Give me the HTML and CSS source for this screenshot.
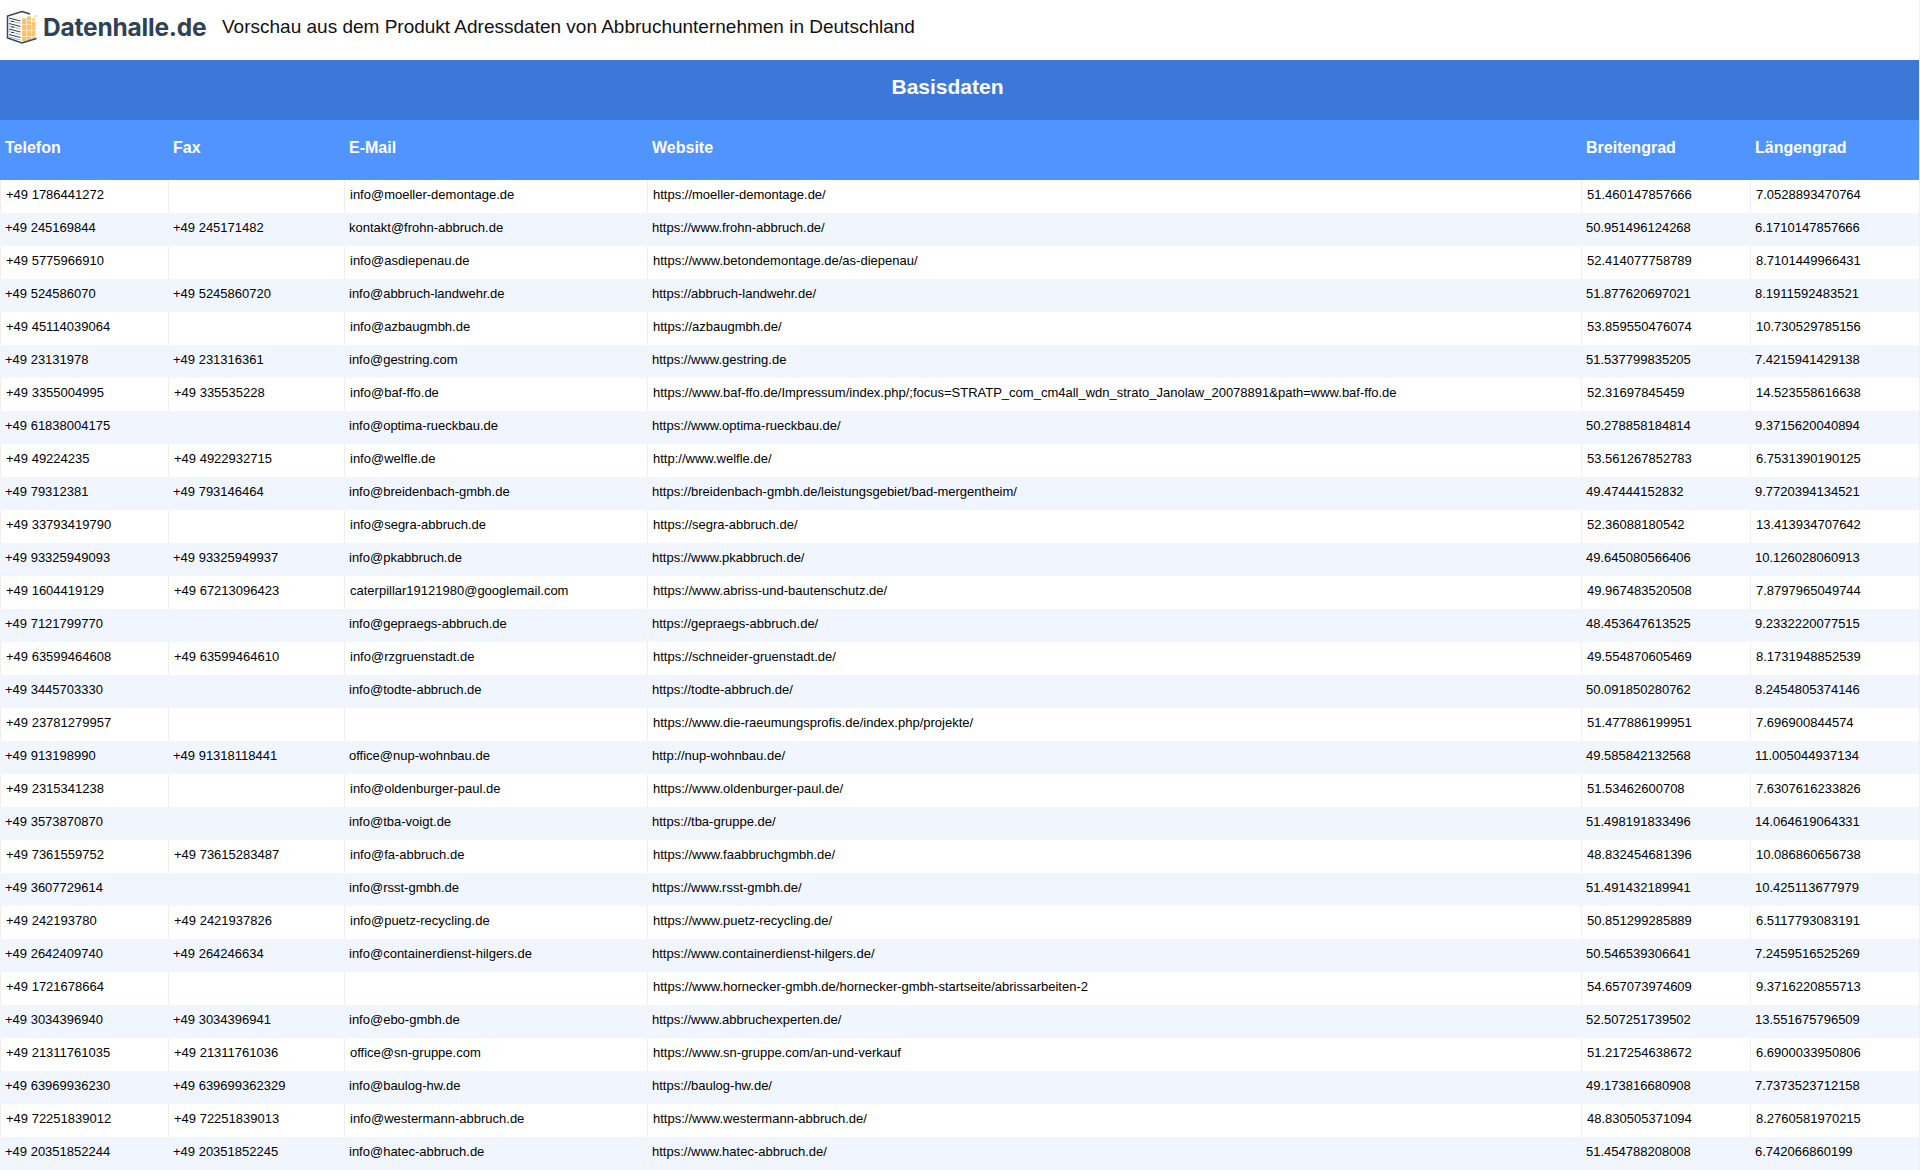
FILE: index.html
```html
<!DOCTYPE html>
<html lang="de">
<head>
<meta charset="utf-8">
<title>Vorschau</title>
<link rel="stylesheet" href="styles.css">
</head>
<body>
<div class="page">
<header class="top">
  <div class="logo">
    <svg class="logo-mark" width="34" height="34" viewBox="0 0 34 34">
      <g fill="#f6c469">
        <rect x="17" y="8.5" width="4.5" height="6"/><rect x="22" y="6.5" width="4" height="3.5"/><rect x="22" y="10.5" width="4" height="4"/>
        <rect x="27" y="8" width="3" height="3" fill="#f9d793"/><rect x="29.5" y="5" width="2" height="2.5" fill="#f9d793"/>
        <rect x="17" y="15" width="4.5" height="5.5"/><rect x="22" y="15" width="4" height="5.5"/><rect x="26.5" y="12" width="4" height="8.5"/>
        <rect x="17" y="21" width="4.5" height="5"/><rect x="22" y="21" width="4" height="5"/><rect x="26.5" y="21" width="4" height="5"/>
        <rect x="17" y="26.5" width="4.5" height="5"/><rect x="22" y="26.5" width="4" height="4"/><rect x="26.5" y="26.5" width="4" height="2"/>
      </g>
      <path d="M17 1.5 L2.5 6 V28 L17 33 L31.5 28.5 M17 1.5 L25 4" fill="none" stroke="#33475b" stroke-width="1.5"/>
      <path d="M4 8 L15.5 11 M4 13.5 L15.5 16.5 M4 19 L15.5 22 M4 24.5 L15.5 27.5" fill="none" stroke="#33475b" stroke-width="1.2"/>
      <path d="M4 10.5 L15.5 13.5 M4 16 L15.5 19 M4 21.5 L15.5 24.5 M4 27 L15.5 30" fill="none" stroke="#33475b" stroke-width="0.8" opacity="0.55"/>
      <path d="M6 11.5h3M6 17h3M6 22.5h3" stroke="#33475b" stroke-width="1"/>
    </svg>
    <span class="logo-text">Datenhalle.de</span>
  </div>
  <h1 class="headline">Vorschau aus dem Produkt Adressdaten von Abbruchunternehmen in Deutschland</h1>
</header>
<table class="data">
<colgroup><col class="c1"><col class="c2"><col class="c3"><col class="c4"><col class="c5"><col class="c6"></colgroup>
<thead>
<tr class="band"><th colspan="6">Basisdaten</th></tr>
<tr class="heads"><th>Telefon</th><th>Fax</th><th>E-Mail</th><th>Website</th><th>Breitengrad</th><th>Längengrad</th></tr>
</thead>
<tbody>
<tr><td>+49 1786441272</td><td></td><td>info@moeller-demontage.de</td><td>https://moeller-demontage.de/</td><td>51.460147857666</td><td>7.0528893470764</td></tr>
<tr><td>+49 245169844</td><td>+49 245171482</td><td>kontakt@frohn-abbruch.de</td><td>https://www.frohn-abbruch.de/</td><td>50.951496124268</td><td>6.1710147857666</td></tr>
<tr><td>+49 5775966910</td><td></td><td>info@asdiepenau.de</td><td>https://www.betondemontage.de/as-diepenau/</td><td>52.414077758789</td><td>8.7101449966431</td></tr>
<tr><td>+49 524586070</td><td>+49 5245860720</td><td>info@abbruch-landwehr.de</td><td>https://abbruch-landwehr.de/</td><td>51.877620697021</td><td>8.1911592483521</td></tr>
<tr><td>+49 45114039064</td><td></td><td>info@azbaugmbh.de</td><td>https://azbaugmbh.de/</td><td>53.859550476074</td><td>10.730529785156</td></tr>
<tr><td>+49 23131978</td><td>+49 231316361</td><td>info@gestring.com</td><td>https://www.gestring.de</td><td>51.537799835205</td><td>7.4215941429138</td></tr>
<tr><td>+49 3355004995</td><td>+49 335535228</td><td>info@baf-ffo.de</td><td>https://www.baf-ffo.de/Impressum/index.php/;focus=STRATP_com_cm4all_wdn_strato_Janolaw_20078891&amp;path=www.baf-ffo.de</td><td>52.31697845459</td><td>14.523558616638</td></tr>
<tr><td>+49 61838004175</td><td></td><td>info@optima-rueckbau.de</td><td>https://www.optima-rueckbau.de/</td><td>50.278858184814</td><td>9.3715620040894</td></tr>
<tr><td>+49 49224235</td><td>+49 4922932715</td><td>info@welfle.de</td><td>http://www.welfle.de/</td><td>53.561267852783</td><td>6.7531390190125</td></tr>
<tr><td>+49 79312381</td><td>+49 793146464</td><td>info@breidenbach-gmbh.de</td><td>https://breidenbach-gmbh.de/leistungsgebiet/bad-mergentheim/</td><td>49.47444152832</td><td>9.7720394134521</td></tr>
<tr><td>+49 33793419790</td><td></td><td>info@segra-abbruch.de</td><td>https://segra-abbruch.de/</td><td>52.36088180542</td><td>13.413934707642</td></tr>
<tr><td>+49 93325949093</td><td>+49 93325949937</td><td>info@pkabbruch.de</td><td>https://www.pkabbruch.de/</td><td>49.645080566406</td><td>10.126028060913</td></tr>
<tr><td>+49 1604419129</td><td>+49 67213096423</td><td>caterpillar19121980@googlemail.com</td><td>https://www.abriss-und-bautenschutz.de/</td><td>49.967483520508</td><td>7.8797965049744</td></tr>
<tr><td>+49 7121799770</td><td></td><td>info@gepraegs-abbruch.de</td><td>https://gepraegs-abbruch.de/</td><td>48.453647613525</td><td>9.2332220077515</td></tr>
<tr><td>+49 63599464608</td><td>+49 63599464610</td><td>info@rzgruenstadt.de</td><td>https://schneider-gruenstadt.de/</td><td>49.554870605469</td><td>8.1731948852539</td></tr>
<tr><td>+49 3445703330</td><td></td><td>info@todte-abbruch.de</td><td>https://todte-abbruch.de/</td><td>50.091850280762</td><td>8.2454805374146</td></tr>
<tr><td>+49 23781279957</td><td></td><td></td><td>https://www.die-raeumungsprofis.de/index.php/projekte/</td><td>51.477886199951</td><td>7.696900844574</td></tr>
<tr><td>+49 913198990</td><td>+49 91318118441</td><td>office@nup-wohnbau.de</td><td>http://nup-wohnbau.de/</td><td>49.585842132568</td><td>11.005044937134</td></tr>
<tr><td>+49 2315341238</td><td></td><td>info@oldenburger-paul.de</td><td>https://www.oldenburger-paul.de/</td><td>51.53462600708</td><td>7.6307616233826</td></tr>
<tr><td>+49 3573870870</td><td></td><td>info@tba-voigt.de</td><td>https://tba-gruppe.de/</td><td>51.498191833496</td><td>14.064619064331</td></tr>
<tr><td>+49 7361559752</td><td>+49 73615283487</td><td>info@fa-abbruch.de</td><td>https://www.faabbruchgmbh.de/</td><td>48.832454681396</td><td>10.086860656738</td></tr>
<tr><td>+49 3607729614</td><td></td><td>info@rsst-gmbh.de</td><td>https://www.rsst-gmbh.de/</td><td>51.491432189941</td><td>10.425113677979</td></tr>
<tr><td>+49 242193780</td><td>+49 2421937826</td><td>info@puetz-recycling.de</td><td>https://www.puetz-recycling.de/</td><td>50.851299285889</td><td>6.5117793083191</td></tr>
<tr><td>+49 2642409740</td><td>+49 264246634</td><td>info@containerdienst-hilgers.de</td><td>https://www.containerdienst-hilgers.de/</td><td>50.546539306641</td><td>7.2459516525269</td></tr>
<tr><td>+49 1721678664</td><td></td><td></td><td>https://www.hornecker-gmbh.de/hornecker-gmbh-startseite/abrissarbeiten-2</td><td>54.657073974609</td><td>9.3716220855713</td></tr>
<tr><td>+49 3034396940</td><td>+49 3034396941</td><td>info@ebo-gmbh.de</td><td>https://www.abbruchexperten.de/</td><td>52.507251739502</td><td>13.551675796509</td></tr>
<tr><td>+49 21311761035</td><td>+49 21311761036</td><td>office@sn-gruppe.com</td><td>https://www.sn-gruppe.com/an-und-verkauf</td><td>51.217254638672</td><td>6.6900033950806</td></tr>
<tr><td>+49 63969936230</td><td>+49 639699362329</td><td>info@baulog-hw.de</td><td>https://baulog-hw.de/</td><td>49.173816680908</td><td>7.7373523712158</td></tr>
<tr><td>+49 72251839012</td><td>+49 72251839013</td><td>info@westermann-abbruch.de</td><td>https://www.westermann-abbruch.de/</td><td>48.830505371094</td><td>8.2760581970215</td></tr>
<tr><td>+49 20351852244</td><td>+49 20351852245</td><td>info@hatec-abbruch.de</td><td>https://www.hatec-abbruch.de/</td><td>51.454788208008</td><td>6.742066860199</td></tr>
</tbody>
</table>
</div>
</body>
</html>
```

FILE: styles.css
```css
html, body {
  margin: 0;
  padding: 0;
  background: #fff;
  overflow: hidden;
}
body {
  font-family: "Liberation Sans", Arial, sans-serif;
  color: #000;
}
.page {
  width: 1919px;
  border-right: 1px solid #efefef;
}
.top {
  display: flex;
  align-items: center;
  height: 60px;
  box-sizing: border-box;
  padding-bottom: 7px;
}
.logo {
  display: flex;
  align-items: center;
  gap: 3px;
  width: 222px;
  padding-left: 5px;
  box-sizing: border-box;
}
.logo-mark {
  flex: none;
}
.logo-text {
  font-family: Inter, "Liberation Sans", sans-serif;
  font-weight: 700;
  font-size: 24.5px;
  letter-spacing: -0.2px;
  color: #2e4155;
  margin-left: 1px;
}
.headline {
  margin: 0;
  font-size: 19px;
  font-weight: 400;
  color: #111;
}
.data {
  width: 1919px;
  table-layout: fixed;
  border-collapse: separate;
  border-spacing: 0;
}
.c1 { width: 168px; }
.c2 { width: 176px; }
.c3 { width: 303px; }
.c4 { width: 934px; }
.c5 { width: 169px; }
.c6 { width: 169px; }
.band th {
  height: 60px;
  box-sizing: border-box;
  padding: 0 24px 7px 0;
  background: #3c78d8;
  color: #fff;
  font-size: 21px;
  text-align: center;
}
.heads th {
  height: 60px;
  box-sizing: border-box;
  padding: 0 0 4px 5px;
  background: #5094ff;
  color: #fff;
  font-size: 16px;
  text-align: left;
}
tbody td {
  height: 33px;
  padding: 0 0 5px 5px;
  box-sizing: border-box;
  font-size: 13px;
  white-space: nowrap;
  vertical-align: middle;
}
tbody tr:nth-child(odd) td {
  border-left: 1px solid #eee;
}
tbody tr:nth-child(even) td {
  background: #f1f6fe;
}
```
